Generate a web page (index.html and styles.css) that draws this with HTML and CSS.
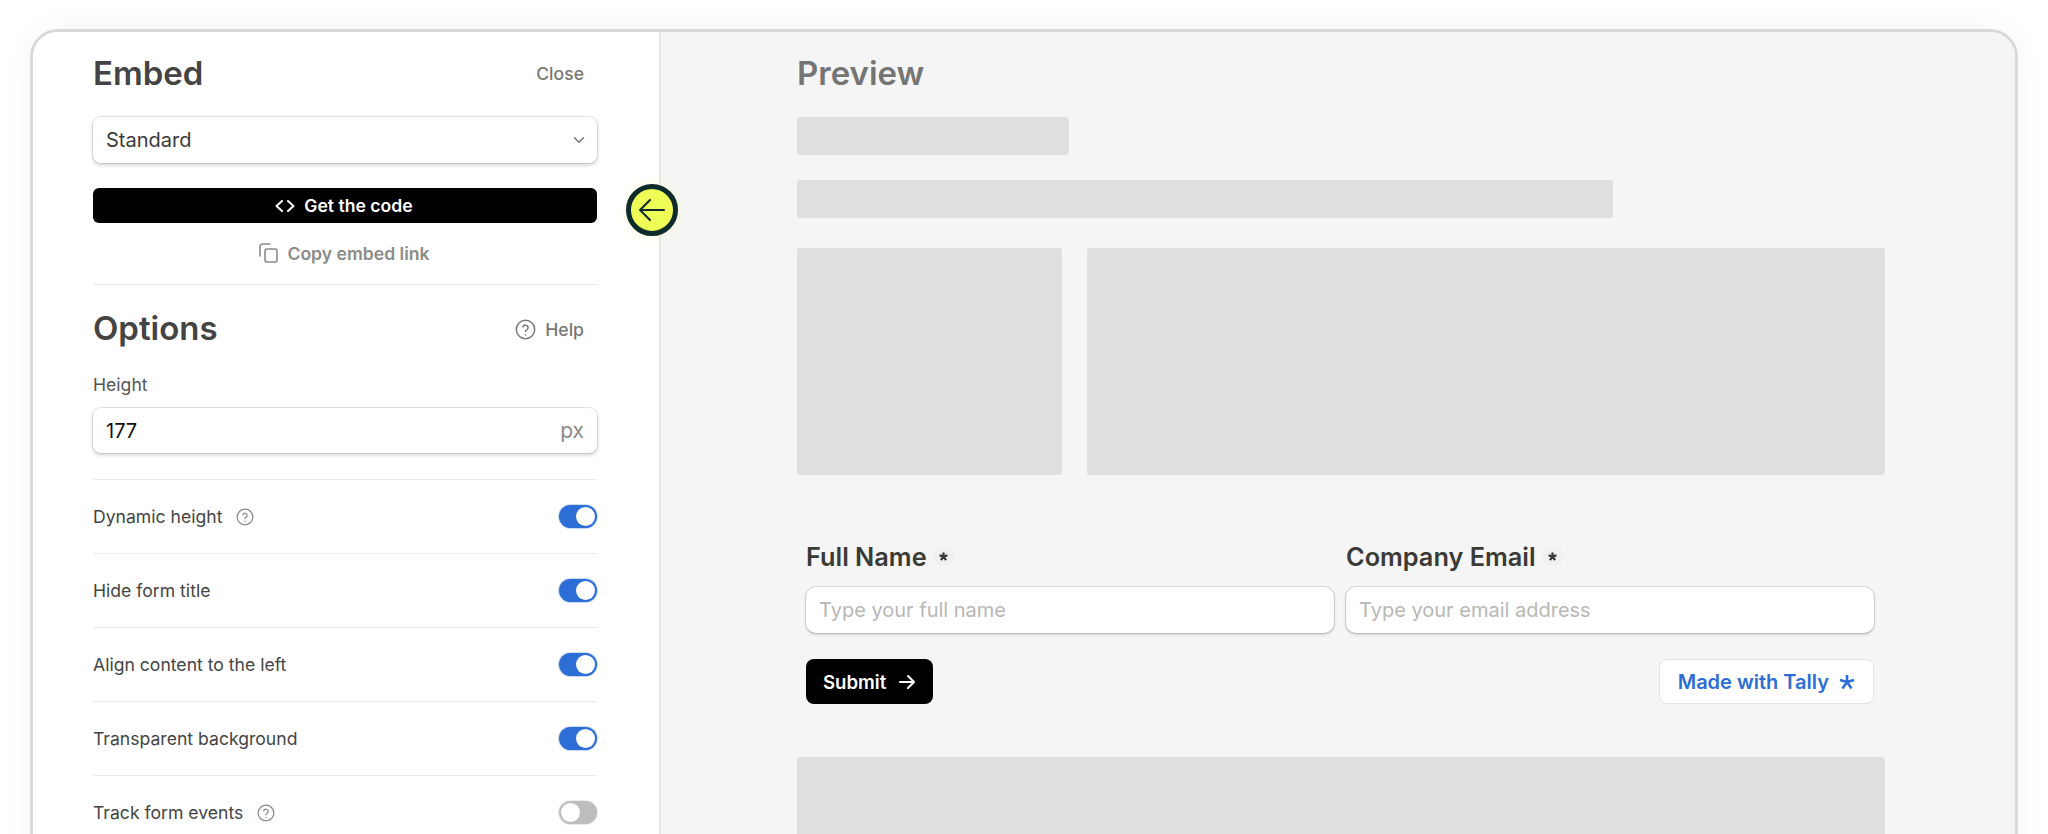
FILE: index.html
```html
<!DOCTYPE html>
<html lang="en">
<head>
<meta charset="utf-8">
<title>Embed</title>
<link rel="stylesheet" href="styles.css">
</head>
<body>
<div class="window">
  <aside class="sidebar">
    <div class="head"><h2 class="title">Embed</h2><span class="link">Close</span></div>
    <div class="field select">
      <span>Standard</span>
      <svg class="chev" viewBox="0 0 24 24"><path d="M6 9l6 6 6-6"/></svg>
    </div>
    <button class="code-btn">
      <svg class="code-ico" viewBox="0 0 20 12"><path d="M7 1L1.500 6 7 11M13 1l5.500 5L13 11"/></svg>
      Get the code
    </button>
    <div class="copy">
      <svg class="copy-ico" viewBox="0 0 20 20"><rect x="7" y="6" width="12" height="13" rx="2"/><path d="M2 13V3.500A2.500 2.500 0 0 1 4.500 1H12"/></svg>
      Copy embed link
    </div>
    <hr class="rule">
    <div class="head opts"><h2 class="title">Options</h2>
      <span class="link help">
        <svg class="q big" viewBox="0 0 24 24"><circle cx="12" cy="12" r="10.500"/><path d="M9 9a3.100 3.100 0 0 1 6 1c0 2-3 2.600-3 4.300"/><path d="M12 18v.2"/></svg>
        Help</span></div>
    <div class="label">Height</div>
    <div class="field num"><span>177</span><span class="unit">px</span></div>
    <div class="row first">
      <span class="name">Dynamic height
        <svg class="q" viewBox="0 0 24 24"><circle cx="12" cy="12" r="10.500"/><path d="M9 9a3.100 3.100 0 0 1 6 1c0 2-3 2.600-3 4.300"/><path d="M12 18v.2"/></svg></span>
      <span class="toggle on"></span>
    </div>
    <div class="row"><span class="name">Hide form title</span><span class="toggle on"></span></div>
    <div class="row"><span class="name">Align content to the left</span><span class="toggle on"></span></div>
    <div class="row"><span class="name">Transparent background</span><span class="toggle on"></span></div>
    <div class="row">
      <span class="name">Track form events
        <svg class="q" viewBox="0 0 24 24"><circle cx="12" cy="12" r="10.500"/><path d="M9 9a3.100 3.100 0 0 1 6 1c0 2-3 2.600-3 4.300"/><path d="M12 18v.2"/></svg></span>
      <span class="toggle"></span>
    </div>
  </aside>
  <main class="preview">
    <div class="head"><h2 class="title muted">Preview</h2></div>
    <div class="sk sk-a"></div>
    <div class="sk sk-b"></div>
    <div class="blocks"><div class="sk"></div><div class="sk"></div></div>
    <form class="form">
      <div class="col">
        <div class="q-label">Full Name
          <span class="req"><svg viewBox="0 0 16 16"><path d="M8 8V1M8 8 1 6M8 8l7-2M8 8l-4.500 6.500M8 8l4.500 6.500"/></svg></span>
        </div>
        <div class="text-in">Type your full name</div>
      </div>
      <div class="col">
        <div class="q-label">Company Email
          <span class="req"><svg viewBox="0 0 16 16"><path d="M8 8V1M8 8 1 6M8 8l7-2M8 8l-4.500 6.500M8 8l4.500 6.500"/></svg></span>
        </div>
        <div class="text-in">Type your email address</div>
      </div>
      <div class="actions">
        <button class="submit" type="button">Submit
          <svg class="arrow" viewBox="0 0 16 14"><path d="M1 7h14M9 1l6 6-6 6"/></svg>
        </button>
        <span class="tally">Made with Tally
          <svg class="star" viewBox="0 0 16 16"><path d="M8 8V1M8 8 1 6M8 8l7-2M8 8l-4.500 6.500M8 8l4.500 6.500"/></svg>
        </span>
      </div>
    </form>
    <div class="sk sk-c"></div>
  </main>
  <div class="collapse">
    <svg viewBox="0 0 26 22"><path d="M25 11H1M11 1 1 11l10 10"/></svg>
  </div>
</div>
</body>
</html>
```
FILE: styles.css
```css
* { box-sizing: border-box; }
html, body { margin: 0; height: 834px; overflow: hidden; background: #fff; }
body { font-family: Inter, "Liberation Sans", sans-serif; color: #3a3a3a; padding: 29px 30px 0; }
svg { display: block; fill: none; stroke: currentColor; stroke-linecap: round; stroke-linejoin: round; }

.window {
  position: relative;
  display: grid;
  grid-template-columns: 628px 1fr;
  height: 860px;
  border: 3px solid #d9d9d9;
  border-radius: 28px;
  overflow: hidden;
  box-shadow: 0 0 30px rgba(0,0,0,.05);
}

.sidebar { background: #fff; padding: 20px 62px 0 60px; border-right: 2px solid #e6e6e6; }
.head { display: flex; align-items: center; justify-content: space-between; height: 42px; }
.title { margin: 0; font-size: 33px; font-weight: 600; color: #444; }
.title.muted { color: #757575; }
.link { font-size: 17.6px; font-weight: 500; color: #787774; margin-right: 13px; }
.help { display: flex; align-items: center; gap: 9px; padding-top: 2px; }

.field {
  display: flex; align-items: center; justify-content: space-between;
  height: 46px; padding: 0 13px;
  border-radius: 8px; background: #fff; font-size: 20px;
  box-shadow: 0 0 0 1px rgba(15,15,15,.1), 0 2px 4px rgba(15,15,15,.2);
}
.select { margin-top: 23px; color: #3a3a3a; padding-right: 9px; }
.chev { width: 18px; height: 18px; stroke: #787774; stroke-width: 2; }
.num { margin-top: 13px; height: 45px; color: #111; }
.unit { color: #8a8a87; font-size: 21px; }

.code-btn {
  display: flex; align-items: center; justify-content: center; gap: 9px;
  width: 100%; height: 35px; margin-top: 25px; padding: 0 2px 0 0; border: 0; border-radius: 6px;
  background: #000; color: #fff; font: 600 17.6px Inter, sans-serif;
}
.code-ico { width: 20px; height: 12px; stroke-width: 2; }
.copy {
  display: flex; align-items: center; justify-content: center; gap: 9px;
  height: 30px; margin-top: 15px; padding-right: 2px; color: #8b8b88; font-size: 17.6px; font-weight: 600;
}
.copy-ico { width: 20px; height: 20px; stroke-width: 1.6; }
.rule { margin: 16px 0 0; border: 0; height: 1px; background: #ececec; }

.opts { margin-top: 22px; }
.label { margin-top: 26px; height: 20px; line-height: 20px; font-size: 17.6px; color: #555; }

.row {
  display: flex; align-items: center; justify-content: space-between;
  height: 74px; border-top: 1px solid #ececec;
}
.row.first { margin-top: 26px; }
.name { display: flex; align-items: center; gap: 14px; font-size: 17.6px; color: #444; }
.q { width: 18px; height: 18px; stroke: #8b8b88; stroke-width: 1.7; }
.q.big { width: 21px; height: 21px; stroke: #787774; }

.toggle {
  position: relative; width: 38px; height: 23px; border-radius: 12px; background: #bdbdbb;
  box-shadow: 0 0 0 1px rgba(189,189,187,.3);
}
.toggle::after {
  content: ""; position: absolute; top: 2px; left: 2px;
  width: 19px; height: 19px; border-radius: 50%; background: #fff;
}
.toggle.on { background: #2d6dd6; box-shadow: 0 0 0 1px rgba(45,109,214,.25); }
.toggle.on::after { left: 17px; }

.preview { background: #f5f5f5; padding: 20px 0 0 136px; }
.sk { background: #dfdfdf; border-radius: 3px; }
.sk-a { width: 272px; height: 38px; margin-top: 23px; }
.sk-b { width: 816px; height: 38px; margin-top: 25px; }
.blocks { display: grid; grid-template-columns: 265px 798px; gap: 25px; margin-top: 30px; height: 227px; }
.sk-c { width: 1088px; height: 120px; margin-top: 53px; }

.form {
  display: grid; grid-template-columns: 528px 528px; column-gap: 12px;
  margin: 0 0 0 9px; width: 1068px; padding-top: 62px;
}
.q-label { height: 38px; display: flex; align-items: center; gap: 6px; font-size: 25.3px; font-weight: 600; color: #3a3a36; }
.req {
  display: flex; align-items: center; justify-content: center;
  width: 22px; height: 22px; border-radius: 50%; background: #f1f1f1; color: #3a3a36;
}
.req svg { width: 9px; height: 9px; stroke-width: 4; stroke-linecap: butt; }
.text-in {
  display: flex; align-items: center; height: 46px; margin-top: 12px; padding: 0 13px;
  border-radius: 10px; background: #fff; color: #b8b8b6; font-size: 20px;
  box-shadow: 0 0 0 1px rgba(15,15,15,.12), 0 2px 3px rgba(15,15,15,.15);
}
.actions {
  grid-column: 1 / -1; display: flex; align-items: center; justify-content: space-between;
  margin-top: 26px;
}
.submit {
  display: flex; align-items: center; gap: 13px; height: 45px; padding: 0 18px 0 17px; border: 0;
  border-radius: 8px; background: #000; color: #fff; font: 600 18.6px Inter, sans-serif;
}
.arrow { width: 16px; height: 14px; stroke-width: 2; }
.tally {
  display: flex; align-items: center; gap: 10px; height: 45px; padding: 0 18px;
  border: 1px solid #e3e3e3; border-radius: 8px; background: #fff;
  color: #2d6dd6; font-size: 20px; font-weight: 600;
}
.star { width: 16px; height: 16px; stroke-width: 2.6; stroke-linecap: butt; }

.collapse {
  position: absolute; left: 593px; top: 152px;
  width: 52px; height: 52px; border: 5px solid #0f2a2a; border-radius: 50%;
  background: #eeff55; color: #0f2a2a;
  display: flex; align-items: center; justify-content: center;
  box-shadow: 0 0 14px rgba(238,255,85,.2);
}
.collapse svg { width: 26px; height: 22px; stroke-width: 2; }
```
